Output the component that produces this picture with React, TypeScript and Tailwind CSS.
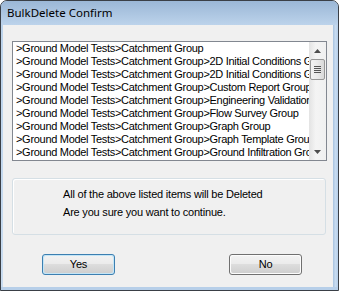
import React from "react";

const rows = [
  ">Ground Model Tests>Catchment Group",
  ">Ground Model Tests>Catchment Group>2D Initial Conditions Group",
  ">Ground Model Tests>Catchment Group>2D Initial Conditions Group",
  ">Ground Model Tests>Catchment Group>Custom Report Group",
  ">Ground Model Tests>Catchment Group>Engineering Validation Group",
  ">Ground Model Tests>Catchment Group>Flow Survey Group",
  ">Ground Model Tests>Catchment Group>Graph Group",
  ">Ground Model Tests>Catchment Group>Graph Template Group",
  ">Ground Model Tests>Catchment Group>Ground Infiltration Group",
];

const ui = { fontFamily: '"Liberation Sans", Arial, sans-serif' };

function Btn({ label, def }: { label: string; def?: boolean }) {
  return (
    <div
      className={
        "w-[73px] h-[21px] rounded-[3px] border flex p-px " +
        (def ? "border-[#3c7fb1] bg-[#c4e5f6]" : "border-[#707070] bg-[#fcfcfc]")
      }
    >
      <div className="flex-1 rounded-[2px] bg-[linear-gradient(to_bottom,#f2f2f2_0%,#ebebeb_45%,#dddddd_50%,#cfcfcf_100%)] flex items-center justify-center text-[11px] tracking-[-0.2px] text-black leading-none">
        {label}
      </div>
    </div>
  );
}

export default function App() {
  return (
    <div className="w-[339px] h-[291px] bg-white">
      <div className="w-[339px] h-[291px] border border-[#3a3f46] rounded-t-[7px] flex flex-col overflow-hidden bg-[#b7cfe9]">
        <div
          className="h-[24px] shrink-0 bg-[linear-gradient(to_bottom,#9bb7d6,#bcd3eb)] flex items-center pl-[6px] text-[11.5px] text-black"
          style={{ fontFamily: '"Noto Sans", "Open Sans", sans-serif' }}
        >
          BulkDelete Confirm
        </div>
        <div className="flex flex-1 min-h-0">
          <div className="w-[2px] shrink-0 bg-[linear-gradient(to_bottom,#bcd3eb,#c9dcf0)]" />
          <div className="flex-1 bg-[#f0f0f0] flex flex-col pt-[16px] pl-[9px]" style={ui}>
            <div className="w-[315px] h-[120px] border border-[#828790] bg-white flex">
              <div className="flex-1 min-w-0 pl-[3px] pt-0 overflow-hidden">
                {rows.map((r, i) => (
                  <div key={i} className="h-[13px] leading-[13px] text-[11px] tracking-[-0.3px] text-black whitespace-nowrap">
                    {r}
                  </div>
                ))}
              </div>
              <div className="w-[17px] shrink-0 bg-[linear-gradient(to_right,#e3e3e3,#f4f4f4_40%,#f0f0f0)] flex flex-col">
                <div className="h-[17px] flex items-center justify-center">
                  <svg width="7" height="4" viewBox="0 0 7 4">
                    <path d="M3.5 0 L7 4 L0 4 Z" fill="#4d4d4d" />
                  </svg>
                </div>
                <div className="h-[21px] mx-px rounded-[2px] border border-[#979797] bg-[linear-gradient(to_right,#f2f2f2,#e9e9e9_50%,#d9d9d9)] flex flex-col items-center justify-center gap-px">
                  <div className="w-[7px] h-px bg-[#555]" />
                  <div className="w-[7px] h-px bg-[#555]" />
                  <div className="w-[7px] h-px bg-[#555]" />
                  <div className="w-[7px] h-px bg-[#555]" />
                </div>
                <div className="flex-1" />
                <div className="h-[17px] flex items-center justify-center">
                  <svg width="7" height="4" viewBox="0 0 7 4">
                    <path d="M0 0 L7 0 L3.5 4 Z" fill="#4d4d4d" />
                  </svg>
                </div>
              </div>
            </div>
            <div className="mt-[17px] w-[314px] h-[57px] rounded-[3px] border border-[#d5dfe5] shadow-[inset_1px_1px_0_#ffffff] pl-[50px] pt-[6px] text-[11px] tracking-[-0.2px] text-black leading-[18px]">
              <div>All of the above listed items will be Deleted</div>
              <div>Are you sure you want to continue.</div>
            </div>
            <div className="mt-[19px] flex pl-[30px]">
              <Btn label="Yes" def />
              <div className="w-[114px]" />
              <Btn label="No" />
            </div>
          </div>
          <div className="w-[5px] shrink-0 bg-[linear-gradient(to_right,#a9c3df,#c7dbf0,#b7cfe9)]" />
        </div>
        <div className="h-[3px] shrink-0 bg-[#b7cfe9]" />
      </div>
    </div>
  );
}
